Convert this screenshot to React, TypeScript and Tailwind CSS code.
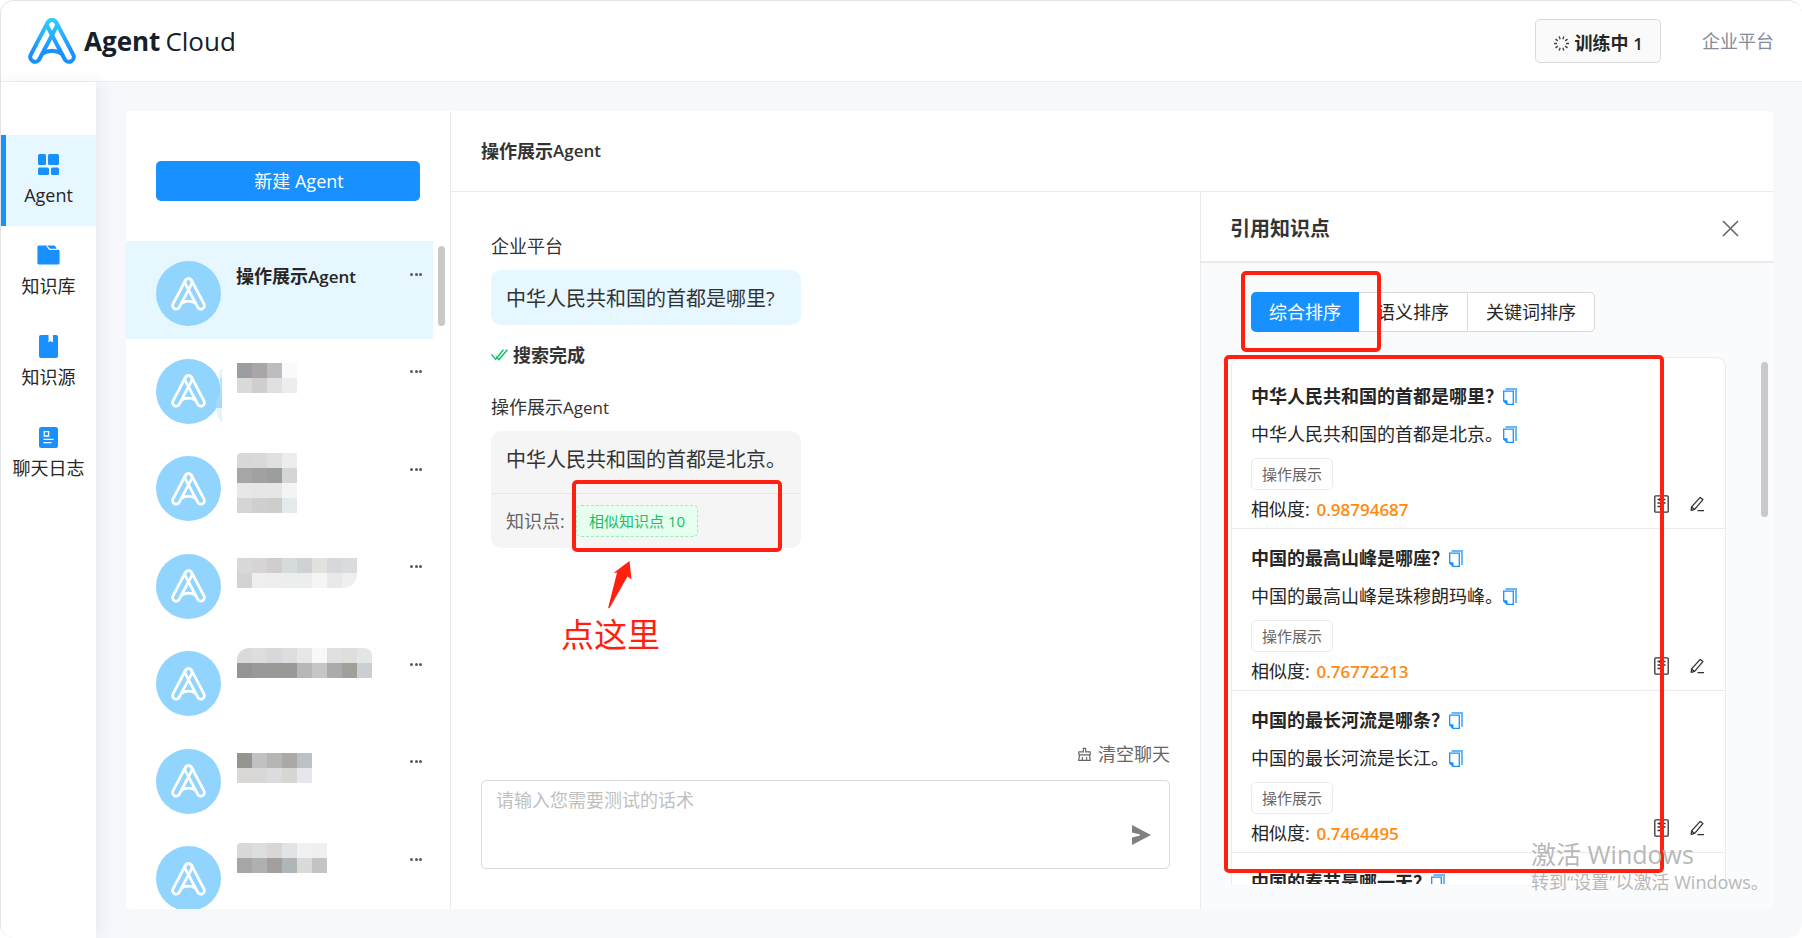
import type { ReactNode } from 'react'
import { AiOutlineClear } from 'react-icons/ai'

interface Agent {
  id: number
  name?: ReactNode
  active?: boolean
  blur?: string[][]
  blurClass?: string
}

interface Knowledge {
  question: string
  answer: string
  score: string
}

const agentName = (
  <>
    <span className="font-bold">操作展示</span>
    <span className="text-[17px] font-semibold">Agent</span>
  </>
)

const agents: Agent[] = [
  { id: 1, name: agentName, active: true },
  {
    id: 2,
    blurClass: 'mt-6',
    blur: [
      ['#9b9da2', '#aba6a5', '#bdbcbe', '#f9fafc'],
      ['#dadad9', '#d0ced1', '#e0dfe1', '#eceeed'],
    ],
  },
  {
    id: 3,
    blurClass: 'mt-[17px] rounded-tl-[4px]',
    blur: [
      ['#d8d8d8', '#d9d9d9', '#e0e0e0', '#eceeed'],
      ['#a7a6a4', '#a1a1a1', '#9c9d9e', '#d4d6d5'],
      ['#e7e7e7', '#e5e6e5', '#e6e6e6', '#f3f5f4'],
      ['#d7d5d3', '#cdd0ce', '#cdcdcb', '#e4e9eb'],
    ],
  },
  {
    id: 4,
    blurClass: 'mt-6 rounded-br-[14px]',
    blur: [
      ['#d8d8d8', '#d8d4d5', '#d0cdce', '#d5dadb', '#cfd1d2', '#e1e1de', '#d7d8da', '#dadbde'],
      ['#d3d3d3', '#efefef', '#efeeee', '#ebeeec', '#eceded', '#f5f5f5', '#e9e9e9', '#efefef'],
    ],
  },
  {
    id: 5,
    blurClass: 'mt-[17px] rounded-tl-[12px] rounded-tr-[8px]',
    blur: [
      ['#dadada', '#dddddd', '#d8d8d9', '#dcdde0', '#e7e7e7', '#f6f9f8', '#e0e0e0', '#dedede', '#e4e5e5'],
      ['#949494', '#9a9998', '#9a9998', '#9a9998', '#b7b7ba', '#c6c6c6', '#ababad', '#a09f9a', '#cbcfd2'],
    ],
  },
  {
    id: 6,
    blurClass: 'mt-6',
    blur: [
      ['#959490', '#bfc1c3', '#b6b6b4', '#aaa9a5', '#bcc1c4'],
      ['#d9d8d7', '#d8d8d8', '#dcdcde', '#d6d6d3', '#e5e7ea'],
    ],
  },
  {
    id: 7,
    blurClass: 'mt-[17px] rounded-tl-[4px]',
    blur: [
      ['#d8d8d8', '#dcdfde', '#d9d7d6', '#e1e3e5', '#f0f1f1', '#eff1f0'],
      ['#a6a6a6', '#b0b0b0', '#a49f9c', '#b0b5b7', '#dadad9', '#c4c4c4'],
    ],
  },
]

const knowledge: Knowledge[] = [
  { question: '中华人民共和国的首都是哪里？', answer: '中华人民共和国的首都是北京。', score: '0.98794687' },
  { question: '中国的最高山峰是哪座？', answer: '中国的最高山峰是珠穆朗玛峰。', score: '0.76772213' },
  { question: '中国的最长河流是哪条？', answer: '中国的最长河流是长江。', score: '0.7464495' },
]

function LogoMark({ className, stroke, strokeWidth }: { className: string; stroke: string; strokeWidth: number }) {
  return (
    <svg viewBox="0 0 48 46" className={className} fill="none" stroke={stroke} strokeWidth={strokeWidth}>
      <defs>
        <linearGradient id="logo-blue" x1="0" y1="0" x2="0" y2="46" gradientUnits="userSpaceOnUse">
          <stop offset="0" stopColor="#36cfff" />
          <stop offset="0.75" stopColor="#1890ff" />
        </linearGradient>
      </defs>
      <path d="M19.7 4.5 2.8 36.6A4.8 4.8 0 0 0 11.3 41.2L28.3 9A4.8 4.8 0 0 0 19.7 4.5Z" />
      <path d="M28.3 4.5 45.2 36.6A4.8 4.8 0 0 1 36.7 41.2L19.7 9A4.8 4.8 0 0 1 28.3 4.5Z" />
      <path d="M14 35.8Q24 29.6 34 35.8" />
    </svg>
  )
}

function Mosaic({ rows, className }: { rows: string[][]; className?: string }) {
  return (
    <svg
      width={rows[0].length * 15}
      height={rows.length * 15}
      className={`ml-4 overflow-hidden ${className ?? ''}`}
      shapeRendering="crispEdges"
      aria-hidden="true"
    >
      {rows.map((row, y) =>
        row.map((color, x) => <rect key={`${x}-${y}`} x={x * 15} y={y * 15} width="15" height="15" fill={color} />)
      )}
    </svg>
  )
}

function CopyIcon() {
  return (
    <svg width="14" height="17" viewBox="0 0 14 17" fill="none">
      <path d="M2.5 1H13V15" stroke="#69b8ff" strokeWidth="2" />
      <path d="M.7 3.2H10.3V16.3H4L.7 13Z" stroke="#1890ff" strokeWidth="1.3" />
      <path d="M.7 12.8H4V16.3Z" fill="#1890ff" stroke="#1890ff" />
    </svg>
  )
}

function DocIcon() {
  return (
    <svg width="15" height="18" viewBox="0 0 15 18" fill="none" stroke="#333" strokeWidth="1.3">
      <rect x=".8" y=".8" width="13.4" height="16.4" rx="1" />
      <path d="M3.5 4.5h8M3.5 8h8M3.5 11.5h5M6 3v3" />
    </svg>
  )
}

function PenIcon() {
  return (
    <svg width="15" height="16" viewBox="0 0 15 16" fill="none" stroke="#333" strokeWidth="1.3" strokeLinejoin="round">
      <path d="M10.2 1.4 12.9 3.6 4.6 13.4 1.2 14.4 1.6 10.9Z" />
      <path d="M1.6 11 4.6 13.4M7.5 14.6H14" />
    </svg>
  )
}

const navItems = [
  {
    label: 'Agent',
    icon: (
      <svg width="21" height="21" viewBox="0 0 21 21" fill="#1890ff">
        <rect width="8" height="11" rx="1.5" />
        <rect x="10" width="11" height="11" rx="1.5" />
        <rect y="13.5" width="11" height="7.5" rx="1.5" />
        <rect x="13" y="13.5" width="8" height="7.5" rx="1.5" />
      </svg>
    ),
  },
  {
    label: '知识库',
    icon: (
      <svg width="23" height="20" viewBox="0 0 23 20">
        <path d="M2 .5H17Q18 .5 18.4 1.4L20 4.5H21Q22.6 4.5 22.6 6V18Q22.6 19.5 21 19.5H2Q.4 19.5 .4 18V2Q.4.5 2 .5Z" fill="#1890ff" />
        <path d="M9.6.5 12.6 4.4H20" fill="none" stroke="#fff" strokeWidth="1.2" />
      </svg>
    ),
  },
  {
    label: '知识源',
    icon: (
      <svg width="19" height="23" viewBox="0 0 19 23" fill="#1890ff">
        <path d="M2 0H9.5V7.5L11.7 6 14 7.5V0H17Q19 0 19 2V21Q19 23 17 23H2Q0 23 0 21V2Q0 0 2 0Z" />
      </svg>
    ),
  },
  {
    label: '聊天日志',
    icon: (
      <svg width="19" height="21" viewBox="0 0 19 21" fill="none">
        <rect width="19" height="21" rx="2.5" fill="#1890ff" />
        <path d="M5.2 4.7H9.6V9H5.2ZM4.5 12.3H14.5M4.5 15.7H12.5" stroke="#fff" strokeWidth="1.3" />
      </svg>
    ),
  },
]

function Header() {
  return (
    <header className="flex h-[81px] shrink-0 items-center justify-between border-b border-[#eceef1] bg-white pr-[28px] pl-[27px]">
      <a href="#" className="flex items-center gap-2 text-[26px] leading-9 text-[#16202a]">
        <LogoMark className="h-[46px] w-[48px]" stroke="url(#logo-blue)" strokeWidth={4} />
        <span className="flex gap-[5px]">
          <span className="font-bold">Agent</span>
          <span>Cloud</span>
        </span>
      </a>
      <div className="flex items-center gap-[41px]">
        <button
          type="button"
          className="flex h-[44px] items-center gap-[5px] rounded-[5px] border border-[#d9d9d9] bg-[#fafafa] px-[17px] pt-1 text-[18px] text-[#262626]"
        >
          <svg width="17" height="17" viewBox="0 0 17 17" stroke="#444" strokeWidth="1.4">
            {Array.from({ length: 10 }, (_, i) => (
              <path key={i} d="M8.5 1V4" transform={`rotate(${i * 36 + 18} 8.5 8.5)`} />
            ))}
          </svg>
          <span>
            <span className="font-bold">训练中</span> <span className="text-[17px] font-semibold">1</span>
          </span>
        </button>
        <a href="#" className="text-[18px] text-[#868b98]">
          企业平台
        </a>
      </div>
    </header>
  )
}

function Sidebar() {
  return (
    <nav className="z-10 w-[95px] shrink-0 bg-white pt-[53px] shadow-[4px_0_16px_rgba(30,40,80,0.07)]">
      {navItems.map((item, i) => (
        <a
          key={item.label}
          href="#"
          className={`flex h-[91px] flex-col items-center pt-[17px] text-[#262626] ${
            i === 0 ? 'border-l-[5px] border-[#1890ff] bg-[#e6f7ff] pr-[5px]' : ''
          }`}
        >
          <span className="flex h-6 items-center">{item.icon}</span>
          <span className="mt-[5px] text-[18px] leading-7">{item.label}</span>
        </a>
      ))}
    </nav>
  )
}

function AgentList() {
  return (
    <section className="flex w-[325px] shrink-0 flex-col border-r border-[#ebebeb] pt-[50px]">
      <button
        type="button"
        className="mr-[30px] mb-10 ml-[30px] h-10 shrink-0 rounded-[5px] bg-[#1890ff] pt-px pl-[22px] text-[18px] text-white"
      >
        新建 Agent
      </button>
      <div className="flex min-h-0 flex-1">
        <div className="flex-1 overflow-hidden">
          <ul className="grid h-[683px] grid-rows-7">
            {agents.map((agent) => (
              <li key={agent.id} className={`flex items-start pr-[11px] pl-[30px] ${agent.active ? 'bg-[#e6f7ff]' : ''}`}>
                <span className="relative mt-5 flex h-[65px] w-[65px] shrink-0 items-center justify-center rounded-full bg-[#91d5ff]">
                  <LogoMark className="h-[34px] w-[35px]" stroke="#fff" strokeWidth={3.8} />
                  {agent.id === 2 && (
                    <svg className="absolute -right-px top-0" width="6" height="65" viewBox="0 0 6 65">
                      <path d="M5 10Q3 14 3 19H6V10Z" fill="#e0f4ff" />
                      <path d="M4 19H6V34H5Z" fill="#b0dfff" />
                      <path d="M2 38 6 34V49H0Q0 42 2 38Z" fill="#a3dbff" />
                      <path d="M0 49H6V64Q1 58 0 49Z" fill="#e2f2ff" />
                    </svg>
                  )}
                </span>
                {agent.name && <span className="mt-[21px] ml-[15px] text-[18px] leading-7 text-[#262626]">{agent.name}</span>}
                {agent.blur && <Mosaic rows={agent.blur} className={agent.blurClass} />}
                <button type="button" aria-label="更多" className="mt-[26px] ml-auto flex h-[14px] w-3 items-center justify-between">
                  <span className="h-[3px] w-[3px] rounded-full bg-[#595959]" />
                  <span className="h-[3px] w-[3px] rounded-full bg-[#595959]" />
                  <span className="h-[3px] w-[3px] rounded-full bg-[#595959]" />
                </button>
              </li>
            ))}
          </ul>
        </div>
        <div className="w-[17px] px-[5px] pt-[5px]">
          <div className="h-[80px] rounded-full bg-[#c9c9c9]" />
        </div>
      </div>
    </section>
  )
}

function Chat() {
  return (
    <section className="flex min-w-0 flex-1 flex-col px-[30px] pb-[40px] text-[18px] leading-7 text-[#333]">
      <div className="flex flex-1 flex-col items-start pt-[40px] pl-[10px]">
        <p>企业平台</p>
        <div className="mt-[10px] flex h-[55px] w-[310px] items-center rounded-[10px] bg-[#e6f7ff] pt-[2px] pl-[15px] text-[20px]">
          中华人民共和国的首都是哪里?
        </div>
        <p className="mt-4 flex items-center gap-[5px] font-bold">
          <svg width="17" height="12" viewBox="0 0 17 12" fill="none" stroke="#19be6b" strokeWidth="1.5">
            <path d="M.6 5.4 4.6 10.4 12.4.8M5.2 7.4 8 10.6 16.4.8" />
          </svg>
          搜索完成
        </p>
        <p className="mt-[24px]">
          操作展示<span className="text-[17px]">Agent</span>
        </p>
        <div className="mt-[9px] w-[310px] rounded-[10px] bg-[#f5f5f5]">
          <p className="flex h-[63px] items-center border-b border-[#e8e8e8] pb-1 pl-[15px] text-[20px]">中华人民共和国的首都是北京。</p>
          <div className="relative flex h-[54px] items-center pl-[15px]">
            <span className="w-[70px] text-[#666]">知识点:</span>
            <button
              type="button"
              className="h-8 rounded-[5px] border border-dashed border-[#9ceabf] bg-[#e6ffef] px-3 text-[15px] text-[#19be6b]"
            >
              相似知识点 10
            </button>
            <div className="pointer-events-none absolute -top-[14px] left-[81px] h-[72px] w-[210px] rounded-[5px] border-4 border-[#ff2010]" />
          </div>
        </div>
        <div className="mt-[13px] ml-[70px] flex flex-col items-center text-[#ff2010]">
          <svg width="24" height="48" viewBox="0 0 24 48" fill="#ff2010" className="ml-[18px]">
            <path d="M21.5 0 23.5 18.5 19.5 15.5 1.5 47Q0 48 .4 46L9 11.5 5.5 12Z" />
          </svg>
          <span className="mt-1 text-[33px] leading-[44px]">点这里</span>
        </div>
      </div>
      <button type="button" className="mb-3 flex items-center gap-[5px] self-end text-[#666]">
        <AiOutlineClear size={17} />
        清空聊天
      </button>
      <div className="relative h-[89px] rounded-[5px] border border-[#d9d9d9]">
        <textarea
          aria-label="测试话术"
          placeholder="请输入您需要测试的话术"
          className="h-full w-full resize-none bg-transparent px-[14px] pt-[5px] outline-none placeholder:text-[#bfbfbf]"
        />
        <button type="button" aria-label="发送" className="absolute right-[18px] bottom-[23px]">
          <svg width="19" height="20" viewBox="0 0 19 20" fill="#808080">
            <path d="M0 0 19 10 0 20V12.5L8 10.6V9.4L0 7.5Z" />
          </svg>
        </button>
      </div>
    </section>
  )
}

function KnowledgeTitle({ text }: { text: string }) {
  return (
    <p className="flex items-center leading-[30px] font-bold">
      {text}
      <button type="button" aria-label="复制问题">
        <CopyIcon />
      </button>
    </p>
  )
}

function KnowledgeRow({ item }: { item: Knowledge }) {
  return (
    <li className="flex items-end justify-between border-b border-[#ebebeb] pt-[14px] pr-[20px] pb-[3px] pl-[19px]">
      <div>
        <KnowledgeTitle text={item.question} />
        <p className="mt-2 flex items-center leading-[30px]">
          {item.answer}
          <button type="button" aria-label="复制答案">
            <CopyIcon />
          </button>
        </p>
        <span className="mt-[9px] flex h-8 w-fit items-center rounded-[5px] border border-[#ebebeb] px-[10px] text-[15px] text-[#666]">
          操作展示
        </span>
        <p className="mt-1 leading-[30px]">
          相似度: <span className="ml-[2px] text-[17px] font-semibold text-[#ff8a12]">{item.score}</span>
        </p>
      </div>
      <div className="flex items-center gap-[21px] pb-3">
        <button type="button" aria-label="查看">
          <DocIcon />
        </button>
        <button type="button" aria-label="编辑">
          <PenIcon />
        </button>
      </div>
    </li>
  )
}

function KnowledgePanel() {
  return (
    <aside className="relative flex w-[573px] shrink-0 flex-col border-l border-[#ebebeb] bg-[#fafbfd] text-[18px] text-[#262626]">
      <div className="flex h-[71px] shrink-0 items-center justify-between border-b-2 border-[#ebebeb] bg-white pt-1 pr-[34px] pl-[29px]">
        <h2 className="text-[20px] leading-7 font-bold text-[#333]">引用知识点</h2>
        <button type="button" aria-label="关闭">
          <svg width="17" height="17" viewBox="0 0 17 17" stroke="#666" strokeWidth="1.6">
            <path d="M1 1 16 16M16 1 1 16" />
          </svg>
        </button>
      </div>
      <div className="relative mt-[29px] ml-[50px] flex h-10 w-fit shrink-0">
        <button type="button" className="rounded-l-[5px] bg-[#1890ff] px-[18px] pt-px text-white">
          综合排序
        </button>
        <button type="button" className="border-y border-[#d9d9d9] bg-white px-[18px]">
          语义排序
        </button>
        <button type="button" className="rounded-r-[5px] border border-[#d9d9d9] bg-white px-[18px]">
          关键词排序
        </button>
        <div className="pointer-events-none absolute -top-[21px] -left-[10px] h-[81px] w-[140px] rounded-[5px] border-4 border-[#ff2010]" />
      </div>
      <div className="mt-[25px] mb-[25px] ml-[30px] flex min-h-0 flex-1">
        <div className="flex-1 overflow-hidden">
          <div className="rounded-[10px] border border-[#ebebeb] bg-white pt-[9px]">
            <ul>
              {knowledge.map((item) => (
                <KnowledgeRow key={item.question} item={item} />
              ))}
              <li className="pt-[14px] pl-[19px]">
                <KnowledgeTitle text="中国的春节是哪一天？" />
              </li>
            </ul>
          </div>
        </div>
        <div className="ml-[35px] w-[12px] pt-[5px] pr-[5px]">
          <div className="h-[155px] rounded-full bg-[#c9c9c9]" />
        </div>
      </div>
      <div className="pointer-events-none absolute top-[163px] left-[23px] h-[518px] w-[440px] rounded-[5px] border-4 border-[#ff2010]" />
      <div className="pointer-events-none absolute right-[10px] bottom-[15px] w-[232px] whitespace-nowrap text-[#b8b8b8]">
        <p className="text-[25px] leading-8">激活 Windows</p>
        <p className="leading-6">转到“设置”以激活 Windows。</p>
      </div>
    </aside>
  )
}

export default function App() {
  return (
    <div className="flex h-screen flex-col overflow-hidden rounded-[14px] border-t border-l border-[#e4e4e4] bg-[#f6f8fb] font-['Open_Sans','Noto_Sans_CJK_SC',sans-serif]">
      <Header />
      <div className="flex min-h-0 flex-1">
        <Sidebar />
        <main className="flex min-w-0 flex-1 pt-[29px] pr-[29px] pb-[29px] pl-[30px]">
          <div className="flex min-w-0 flex-1 overflow-hidden rounded-[5px] bg-white">
            <AgentList />
            <div className="flex min-w-0 flex-1 flex-col">
              <h1 className="flex h-[81px] shrink-0 items-center border-b border-[#ebebeb] pl-[30px] text-[18px] text-[#333]">{agentName}</h1>
              <div className="flex min-h-0 flex-1">
                <Chat />
                <KnowledgePanel />
              </div>
            </div>
          </div>
        </main>
      </div>
    </div>
  )
}
